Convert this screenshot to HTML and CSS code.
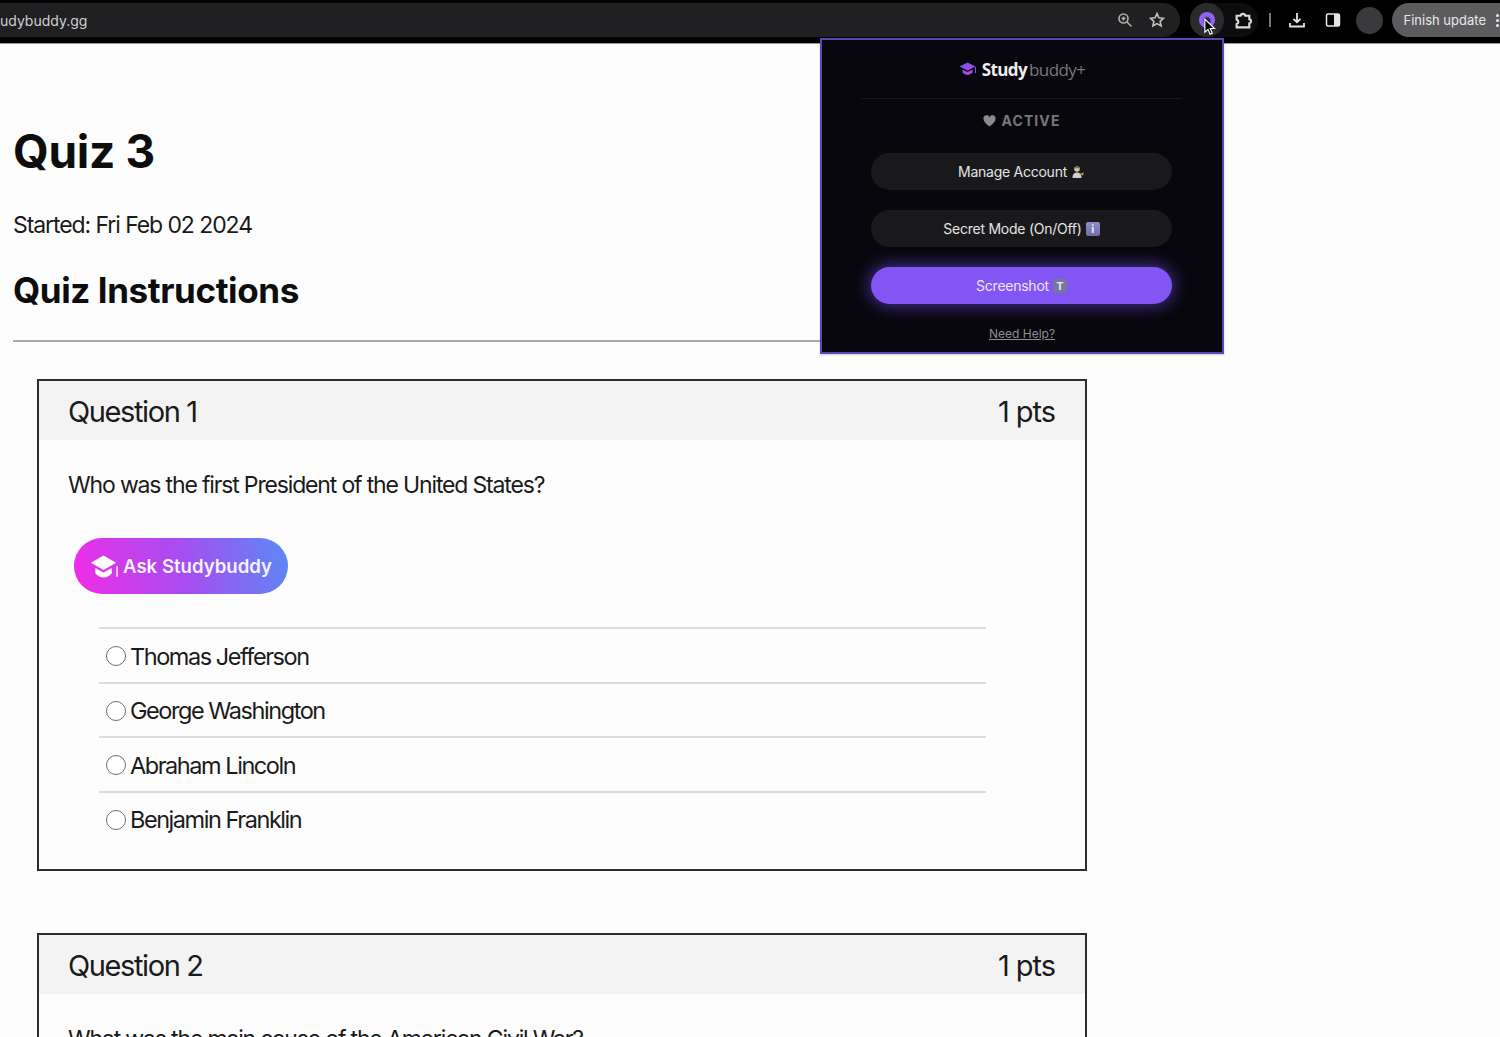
FILE: index.html
```html
<!DOCTYPE html>
<html lang="en">
<head>
<meta charset="utf-8">
<title>Quiz 3</title>
<link rel="stylesheet" href="styles.css">
</head>
<body>
<header class="toolbar">
  <div class="address">
    <span class="url">udybuddy.gg</span>
    <svg class="icon zoom-icon" viewBox="0 0 16 16"><circle cx="6.500" cy="6.500" r="4.500"/><path d="M10 10l4.500 4.500M4.500 6.500h4M6.500 4.500v4"/></svg>
    <svg class="icon star-icon" viewBox="0 0 16 16"><path d="M8 1.600l1.900 4.200 4.600.5-3.400 3.100 1 4.500L8 11.600l-4.100 2.300 1-4.500L1.500 6.300l4.600-.5z"/></svg>
  </div>
  <div class="ext-group">
    <span class="ext-active"><span class="ext-dot"></span></span>
    <svg class="icon puzzle-icon" viewBox="0 0 18 18"><path d="M2.500 4.500h3.700a2.300 2.300 0 0 1 4.500 0h3.800v3.200a2.100 2.100 0 0 1 0 4.100v3.700H2.500v-3.200a2.100 2.100 0 0 0 0-4.100z"/></svg>
  </div>
  <span class="sep"></span>
  <svg class="icon download-icon" viewBox="0 0 18 18"><path d="M9 2v9M5.500 7.800L9 11.300l3.500-3.500M2 12v3.500h14V12"/></svg>
  <svg class="side-icon" viewBox="0 0 16 16"><rect x="1.500" y="2" width="13" height="12" rx="1.500"/><rect class="side-fill" x="9" y="2" width="5.500" height="12"/></svg>
  <span class="avatar"></span>
  <div class="finish"><span>Finish update</span><span class="dots"><i></i><i></i><i></i></span></div>
</header>
<svg class="cursor" viewBox="0 0 14 20"><path d="M2 1v14l3.400-3 2.200 5.200 2.400-1-2.200-5.100h4.600z"/></svg>

<main class="page">
  <h1>Quiz 3</h1>
  <p class="started">Started: Fri Feb 02 2024</p>
  <h2>Quiz Instructions</h2>
  <hr class="rule">

  <section class="question first">
    <div class="q-head"><span class="q-title">Question 1</span><span class="q-pts">1 pts</span></div>
    <div class="q-body">
      <p class="q-text">Who was the first President of the United States?</p>
      <button class="ask" type="button">
        <svg class="ask-cap" viewBox="0 0 30 25"><path class="cap-top" d="M14 1L1 8.500l13 7.500 13-7.500z"/><path class="cap-top" d="M5.500 14v5.500c2 2.800 5 4.300 8.500 4.300s6.500-1.500 8.500-4.300V14L14 18.800z"/><path class="cap-tassel" d="M28 12v11"/></svg>
        <span>Ask Studybuddy</span>
      </button>
      <ul class="answers">
        <li><span class="radio"></span>Thomas Jefferson</li>
        <li><span class="radio"></span>George Washington</li>
        <li><span class="radio"></span>Abraham Lincoln</li>
        <li><span class="radio"></span>Benjamin Franklin</li>
      </ul>
    </div>
  </section>

  <section class="question second">
    <div class="q-head"><span class="q-title">Question 2</span><span class="q-pts">1 pts</span></div>
    <div class="q-body">
      <p class="q-text">What was the main cause of the American Civil War?</p>
    </div>
  </section>
</main>

<aside class="popup">
  <div class="brand">
    <svg class="brand-cap" viewBox="0 0 18 14"><defs><linearGradient id="capg" x1="0" y1="0" x2="1" y2="1"><stop offset="0" stop-color="#5f5cf0"/><stop offset="1" stop-color="#d43ae0"/></linearGradient></defs><path fill="url(#capg)" d="M8.500 0.500L0.500 4.500l8 4 8-4zM3.500 7.500v3c1.500 1.500 3.500 2.500 5 2.500s3.500-1 5-2.500v-3l-5 2.500z"/><path d="M16.500 5v6" stroke="#6a5cf0" stroke-width="1"/></svg>
    <b>Study</b><span>buddy+</span>
  </div>
  <div class="status">
    <svg class="heart" viewBox="0 0 14 13"><path d="M7 12.500C2 8.500 0.500 6.500 0.500 4A3.300 3.300 0 0 1 7 2.800 3.300 3.300 0 0 1 13.500 4c0 2.500-1.500 4.500-6.500 8.500z"/></svg>
    <span>ACTIVE</span>
  </div>
  <div class="btn">Manage Account
    <svg class="emoji" viewBox="0 0 14 14"><circle cx="6" cy="4" r="2.800" fill="#d9c3a6"/><path d="M3 3.200h6L6 1z" fill="#666"/><path d="M1.500 13c0-4 2-5.500 4.500-5.500S10.500 9 10.500 13z" fill="#cfcfcf"/><path d="M8 9l5-1.500-1 3z" fill="#b8923f"/></svg>
  </div>
  <div class="btn">Secret Mode (On/Off) <span class="info">i</span></div>
  <div class="btn primary">Screenshot <span class="info">T</span></div>
  <a class="help" href="#">Need Help?</a>
</aside>
</body>
</html>
```

FILE: styles.css
```css
* { box-sizing: border-box; }
html, body { margin: 0; height: 100%; }
body {
  background: #fdfdfd;
  color: #0d0d0d;
  font-family: Inter, "Liberation Sans", sans-serif;
  height: 1037px;
  overflow: hidden;
  position: relative;
}
.toolbar {
  height: 44px;
  background: #000;
  border-bottom: 1px solid #9a9a9a;
  display: flex;
  align-items: center;
  padding: 3px 0 6px;
  overflow: hidden;
  color: #e6e6e6;
}
.address {
  width: 1180px;
  height: 34px;
  background: #202023;
  border-radius: 0 17px 17px 0;
  display: flex;
  align-items: center;
  flex: none;
}
.url { font-size: 14px; color: #cfcfcf; margin-right: auto; }
.icon { fill: none; stroke: #d4d4d4; stroke-width: 1.600; flex: none; }
.zoom-icon { width: 16px; height: 16px; margin-right: 16px; stroke: #b0b0b0; }
.star-icon { width: 16px; height: 16px; margin-right: 15px; stroke: #c4c4c4; }
.ext-group {
  margin-left: 10px;
  height: 34px;
  width: 68px;
  display: flex;
  align-items: center;
  border-radius: 17px;
  background: #0d0d0f;
  flex: none;
}
.ext-active {
  width: 34px;
  height: 34px;
  border-radius: 50%;
  background: #2b2b2e;
  display: flex;
  align-items: center;
  justify-content: center;
}
.ext-dot {
  width: 16px;
  height: 16px;
  border-radius: 50%;
  background: radial-gradient(circle at 50% 55%, #2a2440 0 3px, #8a5cf6 4px, #a06cf5 100%);
}
.puzzle-icon { width: 19px; height: 19px; margin-left: 10px; stroke-width: 2; stroke: #dedede; }
.sep { width: 1.500px; height: 14px; background: #777; margin: 0 0 0 11px; flex: none; }
.download-icon { width: 18px; height: 18px; margin: 0 0 0 17px; stroke-width: 1.800; stroke: #e4e4e4; }
.side-icon { width: 16px; height: 16px; margin: 0 0 0 19px; fill: none; stroke: #e4e4e4; stroke-width: 1.500; flex: none; }
.side-fill { fill: #e4e4e4; stroke: none; }
.avatar { width: 27px; height: 27px; border-radius: 50%; background: #3a3a3c; margin: 0 0 0 15px; flex: none; }
.finish {
  margin: 0 0 0 9px;
  width: 130px;
  height: 34px;
  border-radius: 17px 0 0 17px;
  background: #5c5c5e;
  color: #e8e8e8;
  font-size: 13px;
  display: flex;
  align-items: center;
  padding-left: 12px;
  flex: none;
}
.dots { display: flex; flex-direction: column; gap: 2px; margin-left: 10px; }
.dots i { width: 3px; height: 3px; border-radius: 50%; background: #e8e8e8; }
.cursor { position: absolute; left: 1203px; top: 18px; width: 13px; height: 19px; fill: #000; stroke: #fff; stroke-width: 1.200; }

.page { padding: 0 0 0 13px; }
h1 { margin: 80px 0 0; font-size: 46px; line-height: 54px; font-weight: 700; letter-spacing: -0.3px; }
.started { margin: 27px 0 0; font-size: 23px; line-height: 40px; letter-spacing: -1.080px; color: #1a1a1a; }
h2 { margin: 25px 0 0; font-size: 35px; line-height: 40px; font-weight: 700; letter-spacing: -0.4px; }
.rule { margin: 30px 0 0; width: 1210px; height: 2px; border: 0; background: #a9a9a9; }
.question { margin-left: 24px; width: 1050px; border: 2px solid #2d2d2d; }
.first { margin-top: 37px; height: 492px; }
.second { margin-top: 62px; height: 200px; }
.q-head {
  height: 59px;
  background: #f3f3f3;
  padding: 2px 30px 0 29px;
  display: flex;
  justify-content: space-between;
  align-items: center;
  font-size: 29px;
  color: #1a1a1a;
}
.q-title { letter-spacing: -1.400px; }
.q-pts { letter-spacing: -1.050px; }
.q-body { padding: 0 0 0 29px; }
.q-text { margin: 0; padding-top: 30px; font-size: 23px; line-height: 30px; letter-spacing: -1.160px; color: #1a1a1a; }
.ask {
  margin: 38px 0 0 6px;
  width: 214px;
  height: 56px;
  border: 0;
  border-radius: 28px;
  background: linear-gradient(78deg, #f02ce6 0%, #a84cf0 50%, #5a8af5 100%);
  color: #f6f2ff;
  font: 600 18.600px Inter, "Liberation Sans", sans-serif;
  display: flex;
  align-items: center;
  padding: 0 0 0 16px;
  gap: 4px;
}
.ask-cap { width: 29px; height: 25px; flex: none; }
.cap-top { fill: #fff; }
.cap-tassel { stroke: #fff; stroke-width: 1.500; fill: none; }
.answers { list-style: none; margin: 33px 0 0 31px; padding: 0; width: 887px; }
.answers li {
  height: 54.500px;
  border-top: 2px solid #dcdcdc;
  display: flex;
  align-items: center;
  padding: 2px 0 0 7px;
  font-size: 23.500px;
  letter-spacing: -1.450px;
  color: #1a1a1a;
}
.radio {
  width: 20px;
  height: 20px;
  border: 1.800px solid #6e6e6e;
  border-radius: 50%;
  margin-right: 4px;
  flex: none;
  background: #fff;
}

.popup {
  position: absolute;
  left: 820px;
  top: 38px;
  width: 404px;
  height: 316px;
  background: #07070d;
  border: 2px solid #5b46b8;
  box-shadow: 0 1px 2px rgba(0, 0, 0, .2);
  display: flex;
  flex-direction: column;
  align-items: center;
  color: #e8e8e8;
}
.brand {
  width: 320px;
  height: 59px;
  border-bottom: 1px solid #17171c;
  display: flex;
  align-items: center;
  justify-content: center;
  font-family: "Open Sans", sans-serif;
  font-size: 17px;
  letter-spacing: -0.600px;
}
.brand-cap { width: 18px; height: 14px; margin-right: 5px; }
.brand b { color: #eee; font-weight: 700; margin-right: 2px; }
.brand span { color: #77777b; font-weight: 400; }
.status {
  height: 43px;
  display: flex;
  align-items: center;
  gap: 5px;
  color: #77777a;
  font-weight: 700;
  font-size: 14px;
  letter-spacing: 1.100px;
}
.heart { width: 13px; height: 12px; fill: #8a8a8a; }
.btn {
  width: 301px;
  height: 37px;
  align-self: flex-start;
  border-radius: 19px;
  background: #19191c;
  display: flex;
  align-items: center;
  justify-content: center;
  gap: 4px;
  font-size: 14px;
  letter-spacing: -0.250px;
  margin: 0 0 20px 49px;
  color: #e4e4e4;
}
.status + .btn { margin-top: 11px; }
.primary {
  background: #8455f5;
  box-shadow: 0 0 16px 3px rgba(124, 77, 245, .5);
  color: #eee6ff;
}
.emoji { width: 14px; height: 14px; }
.info {
  width: 14px;
  height: 14px;
  border-radius: 2px;
  background: linear-gradient(180deg, #8d8dc8, #6f6fa8);
  color: #e8e8ff;
  font-size: 11px;
  font-weight: 700;
  text-align: center;
  line-height: 14px;
}
.primary .info { background: #77779c; }
.help { margin-top: 2px; font-size: 12px; color: #8f8f92; text-decoration: underline; }
```
